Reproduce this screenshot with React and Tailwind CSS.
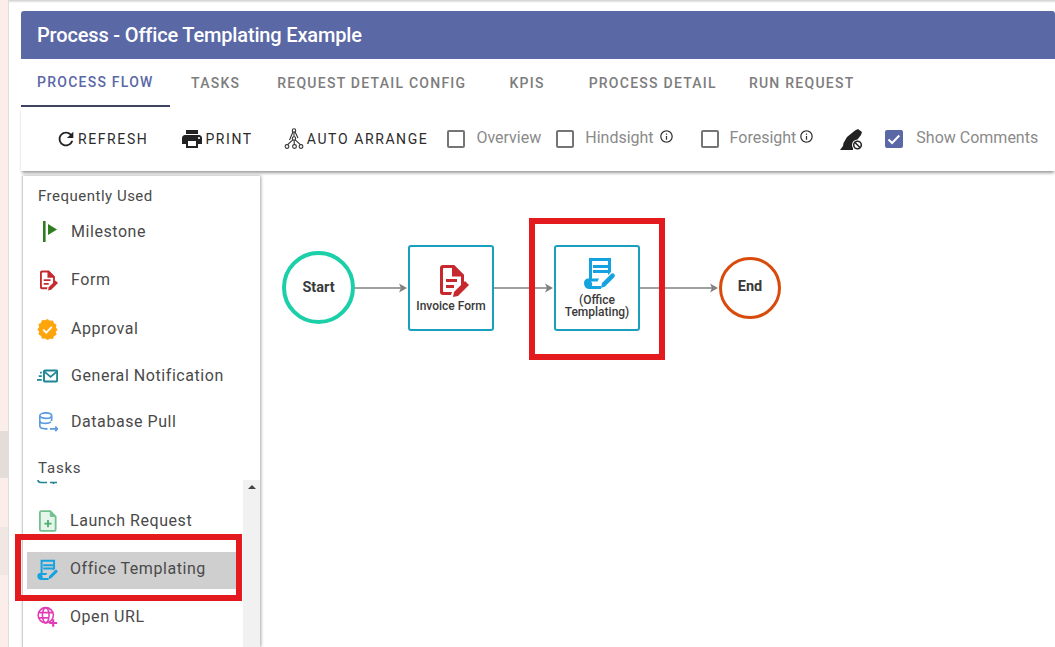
import React from 'react';

const font = { fontFamily: 'Roboto, sans-serif' };

const RefreshIcon = () => (
  <svg viewBox="0 0 24 24" className="w-[22px] h-[22px] fill-[#222]">
    <path d="M17.65 6.35C16.2 4.9 14.21 4 12 4c-4.42 0-7.99 3.58-7.99 8s3.57 8 7.99 8c3.73 0 6.84-2.55 7.73-6h-2.08c-.82 2.33-3.04 4-5.65 4-3.31 0-6-2.69-6-6s2.69-6 6-6c1.66 0 3.14.69 4.22 1.78L13 11h7V4l-2.35 2.35z" />
  </svg>
);

const PrintIcon = () => (
  <svg viewBox="0 0 24 24" className="w-[24px] h-[24px] fill-[#222]">
    <path d="M19 8H5c-1.66 0-3 1.34-3 3v6h4v4h12v-4h4v-6c0-1.66-1.34-3-3-3zm-3 11H8v-5h8v5zm3-7c-.55 0-1-.45-1-1s.45-1 1-1 1 .45 1 1-.45 1-1 1zm-1-9H6v4h12V3z" />
  </svg>
);

const ArrangeIcon = () => (
  <svg viewBox="0 0 20 22" className="w-[20px] h-[22px] fill-none stroke-[#333] stroke-[1.1]">
    <circle cx="10" cy="2.5" r="1.7" />
    <circle cx="10" cy="10.5" r="1.7" />
    <circle cx="3" cy="18.5" r="1.9" />
    <circle cx="10.5" cy="18.5" r="1.9" />
    <circle cx="17" cy="18.5" r="1.9" />
    <path d="M10 4.2v4.6M8.8 11.8L3.6 16.7M10.2 12.2v4.4M11.2 11.8l5.2 4.9M9 3.8L5.5 12M11 3.8L14 10" />
  </svg>
);

const InfoIcon = () => (
  <svg viewBox="0 0 24 24" className="w-[15px] h-[15px] fill-[#333]">
    <path d="M11 7h2v2h-2zm0 4h2v6h-2zm1-9C6.48 2 2 6.48 2 12s4.48 10 10 10 10-4.48 10-10S17.52 2 12 2zm0 18c-4.41 0-8-3.59-8-8s3.59-8 8-8 8 3.59 8 8-3.59 8-8 8z" />
  </svg>
);

const MarkerOffIcon = () => (
  <svg viewBox="0 0 24 21" className="w-[24px] h-[21px]">
    <path d="M15 1.500l3-1.500 4 3-1 3-5 6.500c-1 1-2 2-3 3v5.500H0l3-4 .5-3L7 8z" fill="#222" />
    <circle cx="17.500" cy="16" r="5.500" fill="#fff" />
    <circle cx="17.500" cy="16" r="3.800" fill="none" stroke="#222" strokeWidth="1.500" />
    <path d="M15 13.500l5 5" stroke="#222" strokeWidth="1.500" />
  </svg>
);

const Checkbox = ({ checked }) =>
  checked ? (
    <span className="w-[18px] h-[18px] rounded-[2px] bg-[#5a68a6] flex items-center justify-center shrink-0">
      <svg viewBox="0 0 18 18" className="w-[18px] h-[18px] fill-none stroke-white stroke-2">
        <path d="M3.5 9.5l3.6 3.5 7.2-7.5" />
      </svg>
    </span>
  ) : (
    <span className="w-[18px] h-[18px] rounded-[2px] border-2 border-[#757575] shrink-0" />
  );

const FormIcon = ({ className }) => (
  <svg viewBox="0 0 29 32" className={className}>
    <path d="M3 0h11l10 10v8l-3 2.500v-9h-9V3H4a1 1 0 0 0-1 1v22a1 1 0 0 0 1 1h8l-1 3H3a3 3 0 0 1-3-3V3a3 3 0 0 1 3-3z" fill="#c62a2f" />
    <path d="M14 0l10 10H14z" fill="#c62a2f" />
    <path d="M6 14h11v3H6zM6 20h8v3H6z" fill="#c62a2f" />
    <path d="M13 32l1-5 11-11 4 4-11 11z" fill="#c62a2f" />
  </svg>
);

const TemplateIcon = ({ className }) => (
  <svg viewBox="0 0 31 32" className={className}>
    <path d="M5 1h22v14l-3 3V4H8v18H5z" fill="#14a3e0" />
    <path d="M9 8h15v3H9zM9 13h15v3H9z" fill="#14a3e0" />
    <path d="M0 26c0-3 2-4.500 4-4.500h11l-1.500 3H7c1 1 1.500 2.500 1 4.500h9v3H5c-3 0-5-3-5-6z" fill="#14a3e0" />
    <path d="M17 31l1-5 9-9c1.500-1.500 3-.5 3.500.5.500 1 .500 2-.5 3l-9 9z" fill="#14a3e0" />
  </svg>
);

const MilestoneIcon = () => (
  <svg viewBox="0 0 16 22" className="w-[16px] h-[22px] ml-[5px]">
    <rect x="1" y="0" width="2.600" height="21" fill="#2f7d20" />
    <path d="M6 3l9 5.500L6 14z" fill="#2f7d20" />
  </svg>
);

const ApprovalIcon = () => (
  <svg viewBox="0 0 22 22" className="w-[21px] h-[21px]">
    <path d="M11 0l2.6 1.8 3.1-.3 1.1 2.9 2.7 1.6-.8 3L21.6 11l-1.9 2.5.8 3-2.7 1.6-1.1 2.9-3.1-.3L11 22l-2.6-1.7-3.1.3-1.1-2.9-2.7-1.6.8-3L.4 11l1.9-2.5-.8-3 2.7-1.6 1.1-2.9 3.1.3z" fill="#ffa50c" />
    <path d="M6.5 11.2l3.2 3.1 5.8-6" fill="none" stroke="#fff" strokeWidth="1.9" />
  </svg>
);

const NotifyIcon = () => (
  <svg viewBox="0 0 24 15" className="w-[23px] h-[14px]">
    <rect x="8" y="1.200" width="15" height="12.600" rx="1" fill="none" stroke="#1f8595" strokeWidth="2.200" />
    <path d="M8.500 2.500l7 6 7-6" fill="none" stroke="#1f8595" strokeWidth="2" />
    <path d="M3.500 2.500h2v2h-2zM2 6.500h3.500v2H2zM0 11h5.500v2H0z" fill="#1f8595" />
  </svg>
);

const DatabaseIcon = () => (
  <svg viewBox="0 0 22 22" className="w-[20px] h-[20px] fill-none stroke-[#5b9be0] stroke-[1.800]">
    <ellipse cx="8.5" cy="4" rx="6.5" ry="3" />
    <path d="M2 4v11.5c0 1.7 3 3 6.5 3h2M15 4v6M2 9.500c0 1.700 3 3 6.500 3 2.500 0 4.500-.6 5.800-1.600" />
    <path d="M13 18.500h8M19 16l2.400 2.500L19 21" />
  </svg>
);

const LaunchIcon = () => (
  <svg viewBox="0 0 20 24" className="w-[18px] h-[22px]">
    <path d="M2.500 1h10l6 6v14.500a1.500 1.500 0 0 1-1.500 1.500H2.500A1.500 1.500 0 0 1 1 21.500v-19A1.500 1.500 0 0 1 2.500 1z" fill="#e6f5ea" stroke="#71c08e" strokeWidth="2" />
    <path d="M12.500 1v6h6" fill="#71c08e" stroke="#71c08e" strokeWidth="1" />
    <path d="M10 11v8M6 15h8" stroke="#4cae70" strokeWidth="2" />
  </svg>
);

const GlobeIcon = () => (
  <svg viewBox="0 0 24 24" className="w-[22px] h-[22px] fill-none stroke-[#e13bb5] stroke-[1.800]">
    <circle cx="10" cy="10" r="8.700" />
    <ellipse cx="10" cy="10" rx="3.800" ry="8.700" />
    <path d="M1.500 7h17M1.500 13h11" />
    <path d="M18.500 14.500v8.500M14 18.800h9" strokeWidth="2.400" />
  </svg>
);

const ToolButton = ({ icon, label, className }) => (
  <div className={`flex items-center ${className}`}>
    {icon}
    <span className="text-[14px] tracking-[1.600px] text-[#2b2b2b] leading-none">{label}</span>
  </div>
);

const CheckItem = ({ label, checked, className, textClass }) => (
  <div className={`flex items-center ${className}`}>
    <Checkbox checked={checked} />
    <span className={`text-[16px] text-[#8a8a8a] leading-none pb-[2px] ${textClass}`}>{label}</span>
  </div>
);

const PaletteRow = ({ icon, label, className, iconClass = 'mr-[13px]' }) => (
  <div className={`flex items-center ${className}`}>
    <span className={`w-[21px] ml-[14px] flex justify-center shrink-0 ${iconClass}`}>{icon}</span>
    <span className="text-[16px] tracking-[0.56px] text-[#4a4a4a] leading-none whitespace-nowrap">{label}</span>
  </div>
);

const Arrow = ({ x1, x2, y }) => (
  <g>
    <path d={`M${x1} ${y}H${x2 - 4}`} stroke="#808080" strokeWidth="1.500" fill="none" />
    <path d={`M${x2 - 8} ${y - 4.500}L${x2} ${y}L${x2 - 8} ${y + 4.500}L${x2 - 6} ${y}Z`} fill="#808080" />
  </g>
);

const App = () => {
  return (
    <div className="w-[1055px] h-[647px] overflow-hidden bg-white relative flex" style={font}>
      {/* page behind, cut off on the left */}
      <div className="w-[9px] h-full flex flex-col bg-[#fbeeea] border-r border-[#dedede] shrink-0">
        <div className="h-[431px]" />
        <div className="h-[47px] bg-[#e4dcd8]" />
        <div className="h-[49px]" />
        <div className="h-[48px] bg-[#f0e6e2]" />
      </div>

      <div className="flex-1 min-w-0 flex flex-col">
        <div className="h-[3px] bg-gradient-to-b from-[#cfcfcf] to-white shrink-0" />
        <div className="pl-[12px] pt-[8px] flex flex-col shrink-0 relative z-10">
          <div className="h-[48px] bg-[#5a68a6] rounded-t-[3px] flex items-center pl-[16px]">
            <span className="text-[20px] font-medium text-white tracking-[-0.16px]">Process - Office Templating Example</span>
          </div>

          {/* tabs */}
          <div className="h-[48px] flex text-[14px] font-medium tracking-[1.25px] text-[#7d7d7d]">
            <div className="w-[149px] flex items-center pl-[16px] text-[#5a68a6] border-b-2 border-[#3d4260]">PROCESS FLOW</div>
            <div className="ml-[21px] flex items-center">TASKS</div>
            <div className="ml-[37px] flex items-center">REQUEST DETAIL CONFIG</div>
            <div className="ml-[43px] flex items-center">KPIS</div>
            <div className="ml-[44px] flex items-center">PROCESS DETAIL</div>
            <div className="ml-[32px] flex items-center">RUN REQUEST</div>
          </div>

          {/* toolbar */}
          <div className="h-[64px] bg-white flex items-center pl-[34px] shadow-[0_3px_3px_-1px_rgba(0,0,0,0.4)]">
            <ToolButton icon={<RefreshIcon />} label="REFRESH" className="gap-[1px]" />
            <ToolButton icon={<PrintIcon />} label="PRINT" className="ml-[32px] gap-[1px]" />
            <ToolButton icon={<ArrangeIcon />} label="AUTO ARRANGE" className="ml-[31px] gap-[3px]" />
            <CheckItem label="Overview" className="ml-[19px]" textClass="ml-[11px]" />
            <CheckItem label="Hindsight" className="ml-[15px]" textClass="ml-[11px]" />
            <span className="ml-[5px] mb-[5px]"><InfoIcon /></span>
            <CheckItem label="Foresight" className="ml-[27px]" textClass="ml-[11px]" />
            <span className="ml-[3px] mb-[5px]"><InfoIcon /></span>
            <span className="ml-[26px]"><MarkerOffIcon /></span>
            <CheckItem label="Show Comments" checked className="ml-[21px]" textClass="ml-[13px]" />
          </div>
        </div>

        {/* body */}
        <div className="flex-1 min-h-0 flex pl-[13px] pt-[5px] relative">
          <div className="w-[238px] shrink-0 bg-white border-l border-[#cfcfcf] shadow-[1px_0_3px_rgba(0,0,0,0.35)] flex flex-col pt-[1px]">
            <div className="pl-[15px] h-[39px] flex items-center text-[15px] tracking-[0.5px] text-[#4a4a4a]">Frequently Used</div>
            <PaletteRow icon={<MilestoneIcon />} label="Milestone" className="h-[32px]" />
            <PaletteRow icon={<FormIcon className="w-[19px] h-[21px] ml-[3px]" />} label="Form" className="h-[32px] mt-[16px]" />
            <PaletteRow icon={<ApprovalIcon />} label="Approval" className="h-[32px] mt-[17px]" />
            <PaletteRow icon={<NotifyIcon />} label="General Notification" className="h-[32px] mt-[15px]" />
            <PaletteRow icon={<DatabaseIcon />} label="Database Pull" className="h-[32px] mt-[14px]" />
            <div className="pl-[15px] h-[24px] mt-[18px] flex items-center text-[15px] tracking-[0.8px] text-[#4a4a4a] shrink-0">Tasks</div>

            <div className="flex-1 min-h-0 flex">
              <div className="flex-1 min-w-0 flex flex-col overflow-hidden">
                <svg width="24" height="4" viewBox="0 0 24 4" className="shrink-0 ml-[14px]">
                  <path d="M1 0c0 2 1 2.500 3 2.500h6M13 2.500h7M16.500 2.500V4" fill="none" stroke="#1f8595" strokeWidth="1.600" />
                </svg>
                <PaletteRow icon={<LaunchIcon />} label="Launch Request" iconClass="mr-[12px]" className="h-[32px] mt-[21px] shrink-0" />
                <div className="h-[37px] mt-[15px] ml-[4px] w-[210px] bg-[#cfcfcf] flex items-center shrink-0 pb-[3px]">
                  <span className="w-[21px] ml-[10px] mr-[12px] flex justify-center"><TemplateIcon className="w-[21px] h-[21px]" /></span>
                  <span className="text-[16px] tracking-[0.56px] text-[#4a4a4a] leading-none">Office Templating</span>
                </div>
                <PaletteRow icon={<GlobeIcon />} label="Open URL" iconClass="mr-[12px]" className="h-[32px] mt-[12px] shrink-0" />
              </div>
              <div className="w-[17px] bg-[#f1f1f1] flex justify-center pt-[5px] shrink-0">
                <span className="w-0 h-0 border-x-[4px] border-x-transparent border-b-[4px] border-b-[#444]" />
              </div>
            </div>
          </div>

          {/* free canvas of the process diagram */}
          <div className="flex-1 relative">
            <svg className="absolute left-[0px] top-[0px]" width="790" height="200" viewBox="0 0 790 200">
              <Arrow x1={94} x2={147} y={112} />
              <Arrow x1={234} x2={293} y={112} />
              <Arrow x1={380} x2={458} y={112} />
            </svg>

            <div className="absolute left-[22px] top-[75px] w-[73px] h-[73px] rounded-full border-4 border-[#1bcfa8] bg-white flex items-center justify-center text-[14.500px] font-bold text-[#3a3a3a]">Start</div>

            <div className="absolute left-[148px] top-[69px] w-[86px] h-[86px] rounded-[3px] border-2 border-[#1a9fbf] bg-white flex flex-col items-center pt-[18px]">
              <FormIcon className="w-[29px] h-[32px] ml-[7px] shrink-0" />
              <span className="mt-[3px] text-[12px] leading-[13px] font-medium text-[#3a3a3a] whitespace-nowrap">Invoice Form</span>
            </div>

            <div className="absolute left-[294px] top-[69px] w-[86px] h-[86px] rounded-[3px] border-2 border-[#1a9fbf] bg-white flex flex-col items-center pt-[10px]">
              <TemplateIcon className="w-[31px] h-[32px] ml-[4px] shrink-0" />
              <span className="mt-[5px] text-[12px] leading-[12px] font-medium text-[#3a3a3a] text-center">(Office<br />Templating)</span>
            </div>

            <div className="absolute left-[459px] top-[81px] w-[62px] h-[62px] rounded-full border-[3.500px] border-[#d84b0a] bg-white flex items-center justify-center text-[14.500px] font-bold text-[#3a3a3a] pb-[2px]">End</div>
          </div>
        </div>
      </div>

      {/* red annotation boxes drawn over the screenshot */}
      <div className="absolute left-[15px] top-[534px] w-[227px] h-[67px] border-[6px] border-[#e31b1f]" />
      <div className="absolute left-[529px] top-[218px] w-[136px] h-[142px] border-[6px] border-[#e31b1f]" />
    </div>
  );
};

export default App;
